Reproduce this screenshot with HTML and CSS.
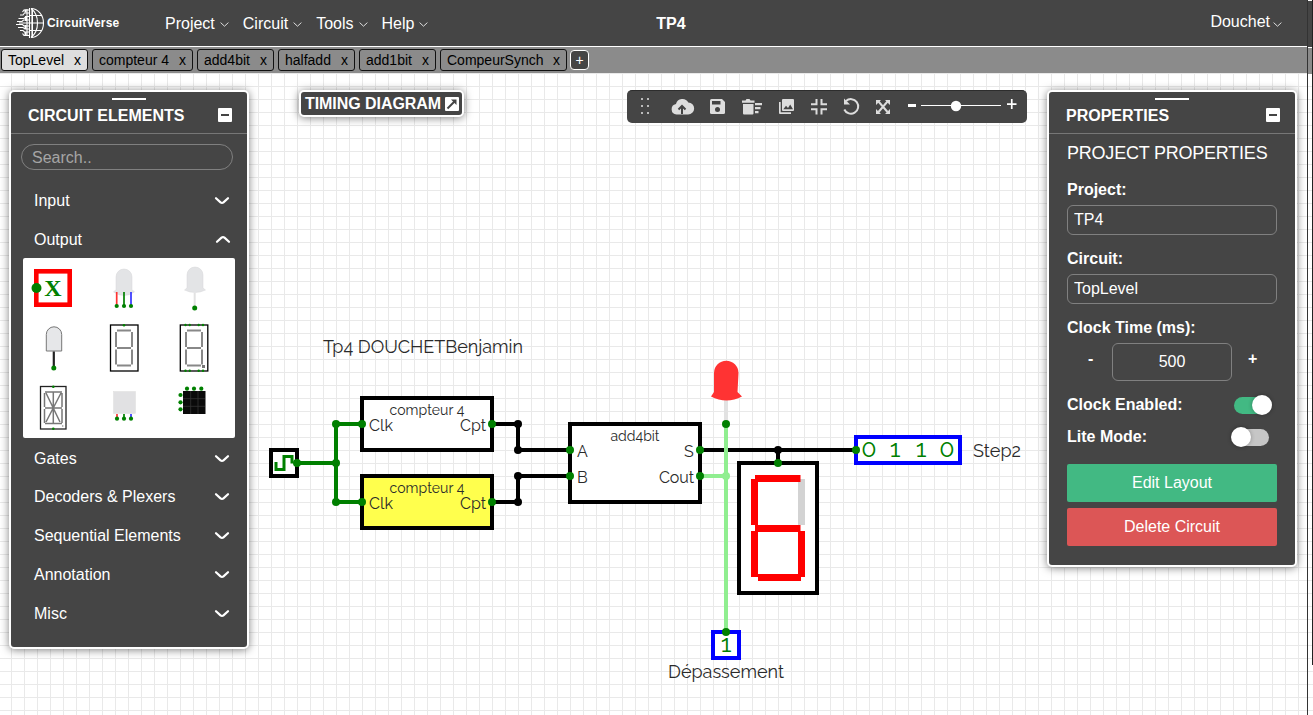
FILE: index.html
```html
<!DOCTYPE html>
<html lang="en">
<head>
<meta charset="utf-8">
<title>CircuitVerse - TP4</title>
<link rel="stylesheet" href="styles.css">
</head>
<body>
<svg class="defs" width="0" height="0">
  <defs>
    <symbol id="thin-chev" viewBox="0 0 9 5"><path d="M.6.6 4.5 4.2 8.4.6" fill="none" stroke="#ddd" stroke-width="1"/></symbol>
    <symbol id="chev" viewBox="0 0 16 10"><path d="M2 2.200 L6.500 6.400Q8 7.500 9.500 6.400L14 2.200" fill="none" stroke="#fff" stroke-width="2.200" stroke-linecap="round"/></symbol>
  </defs>
</svg>
<div class="app">
  <header class="navbar">
    <div class="brand">
      <svg width="30" height="32" viewBox="0 0 30 32" fill="none" stroke="#fff" stroke-width="1.100">
        <path d="M14.500 1v30M16 1.500c6.500 0 12.500 6 12.500 14.500S22.500 30.500 16 30.500M16 1.500c4 3 6.500 8 6.500 14.500S20 27.500 16 30.500M15 8.500h11.500M15 16h13.500M15 23.500h11.500"/>
        <path d="M17.200 1.500v29" stroke-width="1.600"/>
        <path d="M14 3H9L7.500 5M14 6H9.500L8 8H5M14 9.500h-3L9 11.500H3.500M14 13H8.500L7 14.500H2M14 16H4M14 19H9l-1.500-1.500H1M14 22h-4l-2-1.500H3M14 25H9.500L8 23.500H5M14 28.500H9L7.500 26.500M12 2v27"/>
        <path d="M10.500 2.500v3M11 9v5M10.500 18v4M10.500 25v3" stroke-width="2"/>
      </svg>
      <span class="brand-name">CircuitVerse</span>
    </div>
    <nav class="menu">
      <span>Project<svg width="9" height="5"><use href="#thin-chev"/></svg></span>
      <span>Circuit<svg width="9" height="5"><use href="#thin-chev"/></svg></span>
      <span>Tools<svg width="9" height="5"><use href="#thin-chev"/></svg></span>
      <span>Help<svg width="9" height="5"><use href="#thin-chev"/></svg></span>
    </nav>
    <div class="project-name">TP4</div>
    <div class="user">Douchet<svg width="9" height="5"><use href="#thin-chev"/></svg></div>
  </header>
  <div class="tabs">
    <div class="tab active w87"><span>TopLevel</span><span>x</span></div>
    <div class="tab w101"><span>compteur 4</span><span>x</span></div>
    <div class="tab w77"><span>add4bit</span><span>x</span></div>
    <div class="tab w77"><span>halfadd</span><span>x</span></div>
    <div class="tab w77"><span>add1bit</span><span>x</span></div>
    <div class="tab w127"><span>CompeurSynch</span><span>x</span></div>
    <div class="tab-add">+</div>
  </div>
  <main class="workspace">
    <svg class="canvas" width="1307" height="642" viewBox="0 73 1307 642">
      <defs>
        <pattern id="grid" x="11" y="86" width="13" height="13" patternUnits="userSpaceOnUse"><path d="M.5 0V13M0 .5H13" stroke="#e9e9e9" stroke-width="1"/></pattern>
      </defs>
      <rect y="73" width="1307" height="642" fill="#fff"/>
      <rect y="73" width="1307" height="642" fill="url(#grid)"/>
      <g class="label">
        <text x="323" y="353" textLength="200">Tp4 DOUCHETBenjamin</text>
        <text x="973" y="457" textLength="48">Step2</text>
        <text x="668" y="678" textLength="116">Dépassement</text>
      </g>
      <g fill="#fff" stroke="#000" stroke-width="4">
        <rect x="362" y="398" width="130" height="52"/>
        <rect x="362" y="476" width="130" height="52" fill="#ffff4d"/>
        <rect x="570" y="424" width="130" height="78"/>
        <rect x="271" y="450" width="26" height="26"/>
      </g>
      <g class="pin">
        <text x="369" y="431" textLength="24">Clk</text><text x="460" y="431" textLength="26">Cpt</text>
        <text x="369" y="509" textLength="24">Clk</text><text x="460" y="509" textLength="26">Cpt</text>
        <text x="577" y="457">A</text><text x="577" y="483">B</text>
        <text x="684" y="457">S</text><text x="659" y="483" textLength="35">Cout</text>
      </g>
      <g class="title">
        <text x="389.500" y="415" textLength="75">compteur 4</text>
        <text x="389.500" y="493" textLength="75">compteur 4</text>
        <text x="610.500" y="441" textLength="49">add4bit</text>
      </g>
      <g fill="none" stroke-width="4">
        <path d="M492 424h26v26h52M492 502h26v-26h52M700 450h156M778 450v13" stroke="#000"/>
        <path d="M297 463h39M362 424h-26v78h26" stroke="green"/>
        <path d="M276 462v7.500h8v-13h8v7" stroke="green" stroke-width="3"/>
        <path d="M726 400v24" stroke="#e2e2e2"/>
        <path d="M726 424v208M700 476h26" stroke="#90ee90"/>
      </g>
      <path d="M714 373a12.200 12.200 0 0 1 24.500 0L737.500 392l4.500 4.500q-15.500 8-31 0l3-4.500z" fill="#f33"/>
      <rect x="739" y="463" width="78" height="130" fill="#fff" stroke="#000" stroke-width="4"/>
      <path d="M801.500 479v46" stroke="#d3d3d3" stroke-width="7"/>
      <path d="M755 478.500h45.500M754.500 479v46M755 528.500h45.500M754.500 531v46M801.500 531v46M758 577.500h43" stroke="red" stroke-width="7"/>
      <g fill="#fff" stroke="#00f" stroke-width="4">
        <rect x="856" y="437" width="104" height="26"/><rect x="713" y="632" width="26" height="26"/>
      </g>
      <g class="bit">
        <text x="869" y="457">0</text><text x="895" y="457">1</text><text x="921" y="457">1</text><text x="947" y="457">0</text><text x="726" y="652">1</text>
      </g>
      <g fill="#000"><circle cx="518" cy="424" r="4"/><circle cx="518" cy="450" r="4"/><circle cx="518" cy="476" r="4"/><circle cx="518" cy="502" r="4"/><circle cx="778" cy="450" r="4"/></g>
      <circle cx="726" cy="476" r="4" fill="#90ee90"/>
      <g fill="green"><circle cx="297" cy="463" r="4"/><circle cx="336" cy="424" r="4"/><circle cx="336" cy="463" r="4"/><circle cx="336" cy="502" r="4"/><circle cx="362" cy="424" r="4"/><circle cx="362" cy="502" r="4"/><circle cx="492" cy="424" r="4"/><circle cx="492" cy="502" r="4"/><circle cx="570" cy="450" r="4"/><circle cx="570" cy="476" r="4"/><circle cx="700" cy="450" r="4"/><circle cx="700" cy="476" r="4"/><circle cx="726" cy="424" r="4"/><circle cx="778" cy="463" r="4"/><circle cx="856" cy="450" r="4"/><circle cx="726" cy="632" r="4"/></g>
    </svg>

    <section class="panel elements">
      <div class="panel-head"><i class="grip"></i><span>CIRCUIT ELEMENTS</span><b class="minimize"></b></div>
      <input class="search" placeholder="Search..">
      <div class="category">Input<svg width="16" height="10"><use href="#chev"/></svg></div>
      <div class="category">Output<svg class="up" width="16" height="10"><use href="#chev"/></svg></div>
      <div class="palette">
        <svg width="212" height="180" viewBox="23 258 212 180">
          <rect x="36.300" y="271.300" width="33.400" height="33.400" fill="#fff" stroke="red" stroke-width="4.600"/>
          <circle cx="36.500" cy="288" r="5" fill="green"/>
          <text class="palette-x" x="53" y="296">X</text>
          <g fill="#e3e4e6" stroke="#d6d6d8" stroke-width=".5">
            <path d="M116 277a8 8 0 0 1 16 0v12.500l2.500 2.500q-10.500 7-21 0l2.500-2.500z"/>
            <path d="M187 275a8 8 0 0 1 16 0v13l2.500 2q-10.500 5-21 0l2.500-2z"/>
            <path d="M194.700 293v13" stroke="#e2e2e2" stroke-width="2"/>
          </g>
          <g fill="none" stroke-width="1.700"><path d="M116.700 292v13" stroke="#f33"/><path d="M124 292v13" stroke="green"/><path d="M131 292v13" stroke="#33f"/></g>
          <path d="M46.300 351v-16.500a7.700 7.700 0 0 1 15.400 0V351z" fill="#e6e7e9" stroke="#777"/>
          <path d="M53.800 351.500V366" stroke="#222" stroke-width="2.200"/>
          <g fill="#fff" stroke="#000" stroke-width="1.300"><rect x="110.500" y="325" width="27.500" height="46"/><rect x="180.300" y="325" width="27.500" height="46"/><rect x="40.500" y="386.500" width="25.500" height="42.500" stroke="#222"/></g>
          <g fill="none" stroke="#888" stroke-width="2">
            <path id="seven" d="M117 330.500h14M116 332v15M132 332v15M117 348h14M116 349.500v15M132 349.500v15M117 365.500h14"/>
            <use href="#seven" x="70"/><rect x="202" y="365" width="3" height="3" fill="#777" stroke="none"/>
          </g>
          <g fill="none" stroke="#777" stroke-width="1.500"><path d="M45 392h17M44.500 393v14M62 393v14M45 408h17M44.500 409v14M62 409v14M45 423.500h17M53.300 392v31M46 393l14 29M61 393 46 422"/></g>
          <rect x="113.500" y="391.500" width="22" height="22" fill="#e1e1e3" stroke="#ddd" stroke-width=".5"/>
          <path d="M117 414v4" stroke="#f33" stroke-width="1.700"/><path d="M124 414v4" stroke="green" stroke-width="1.700"/><path d="M131 414v4" stroke="#33f" stroke-width="1.700"/>
          <rect x="183" y="391" width="22.500" height="23" fill="#0a0a0a"/><path d="M190.700 391v23M198 391v23M183 398.700h22M183 406.300h22" stroke="#333" stroke-width=".8"/>
          <g fill="green"><circle cx="116.700" cy="306" r="2.100"/><circle cx="124" cy="306" r="2.100"/><circle cx="131" cy="306" r="2.100"/><circle cx="194.700" cy="308" r="2.500"/><circle cx="53.800" cy="368" r="2.500"/><circle cx="117" cy="418.700" r="2.100"/><circle cx="124" cy="418.700" r="2.100"/><circle cx="131" cy="418.700" r="2.100"/><circle cx="187" cy="388.700" r="2.100"/><circle cx="194" cy="388.700" r="2.100"/><circle cx="201.300" cy="388.700" r="2.100"/><circle cx="180.500" cy="395" r="2.100"/><circle cx="180.500" cy="402.300" r="2.100"/><circle cx="180.500" cy="409.300" r="2.100"/>
          <circle cx="124" cy="325.300" r="1.300"/><circle cx="53.300" cy="386.700" r="1.300"/><circle cx="53.300" cy="428.700" r="1.300"/><circle cx="185.500" cy="325" r="1.200"/><circle cx="189.700" cy="325" r="1.200"/><circle cx="198.700" cy="325" r="1.200"/><circle cx="203" cy="325" r="1.200"/><circle cx="185.500" cy="370.700" r="1.200"/><circle cx="189.700" cy="370.700" r="1.200"/><circle cx="198.700" cy="370.700" r="1.200"/><circle cx="203" cy="370.700" r="1.200"/></g>
          <circle cx="62.700" cy="426" r=".8" fill="#888"/>
        </svg>
      </div>
      <div class="category">Gates<svg width="16" height="10"><use href="#chev"/></svg></div>
      <div class="category">Decoders &amp; Plexers<svg width="16" height="10"><use href="#chev"/></svg></div>
      <div class="category">Sequential Elements<svg width="16" height="10"><use href="#chev"/></svg></div>
      <div class="category">Annotation<svg width="16" height="10"><use href="#chev"/></svg></div>
      <div class="category">Misc<svg width="16" height="10"><use href="#chev"/></svg></div>
    </section>

    <div class="panel timing"><span>TIMING DIAGRAM</span>
      <svg width="14" height="14" viewBox="0 0 14 14"><rect width="14" height="14" rx="1" fill="#fff"/><path d="M2.500 11.500 10 4" fill="none" stroke="#444" stroke-width="2"/><path d="M6 2.500h5.500V8z" fill="#444"/></svg>
    </div>

    <div class="toolbar">
      <svg width="400" height="33" viewBox="627 90 400 33" fill="#ddd">
        <path d="M641 98h2v2h-2zM647 98h2v2h-2zM641 105h2v2h-2zM647 105h2v2h-2zM641 112h2v2h-2zM647 112h2v2h-2z" fill="#bbb"/>
        <path d="M676.500 114.500a5.300 5.300 0 0 1-.5-10.500 6.600 6.600 0 0 1 12.300-1.500 6 6 0 0 1-.3 12z"/>
        <path d="M682 114v-7M678.500 109.500l3.500-3.500 3.500 3.500" fill="none" stroke="#444" stroke-width="2"/>
        <path d="M711.500 99h10.500l3 3v10.500a1.500 1.500 0 0 1-1.500 1.500h-12a1.500 1.500 0 0 1-1.500-1.500v-12a1.500 1.500 0 0 1 1.500-1.500z"/>
        <path d="M712 101h8.500v3.500H712z" fill="#444"/><circle cx="717.500" cy="109.500" r="2.500" fill="#444"/>
        <path d="M742 100.500h3.500l1-1.500h3l1 1.500h4v2.200h-12.500zM743 104h10.500v9.500a1 1 0 0 1-1 1H744a1 1 0 0 1-1-1zM755 103h7v2.200h-7zM755 107h5.500v2.200H755zM755 111h3.500v2.200H755z"/>
        <path d="M783 99h10a1 1 0 0 1 1 1v10a1 1 0 0 1-1 1h-10a1 1 0 0 1-1-1v-10a1 1 0 0 1 1-1zM779 102h1.700v10.300H791v1.700h-11a1 1 0 0 1-1-1z"/>
        <path d="m783.300 109.300 2.700-3.500 2 2.200 2.200-3.500 2.800 4.800z" fill="#444"/>
        <path d="M816.500 99v5.200h-5.500M821.500 99v5.200h5.500M816.500 114.500v-5.200h-5.500M821.500 114.500v-5.200h5.500" fill="none" stroke="#ddd" stroke-width="2"/>
        <path d="M846 101A7.300 7.300 0 1 1 844.300 109.500" fill="none" stroke="#ddd" stroke-width="2"/><path d="M844 98.500v6h6z"/>
        <path d="m878.500 101.500 9 10.500M887.500 101.500l-9 10.500" fill="none" stroke="#ddd" stroke-width="2"/>
        <path d="M876 100h5l-5 5zM890 100h-5l5 5zM876 114h5l-5-5zM890 114h-5l5-5z"/>
        <path d="M908 104h8v3h-8z" fill="#fff"/><path d="M921 105h80v1h-80z" fill="#fff"/><circle cx="956" cy="106" r="5.200" fill="#fff"/>
        <path d="M1007 103.200h9.500v1.700H1007zM1010.900 99h1.700v10h-1.700z" fill="#fff"/>
      </svg>
    </div>

    <section class="panel properties">
      <div class="panel-head"><i class="grip"></i><span>PROPERTIES</span><b class="minimize"></b></div>
      <div class="props">
        <h2>PROJECT PROPERTIES</h2>
        <label>Project:</label><input class="field" value="TP4">
        <label>Circuit:</label><input class="field" value="TopLevel">
        <label>Clock Time (ms):</label>
        <div class="stepper"><span>-</span><input class="field" value="500"><span>+</span></div>
        <div class="switch-row"><span>Clock Enabled:</span><i class="switch on"></i></div>
        <div class="switch-row"><span>Lite Mode:</span><i class="switch"></i></div>
        <button class="btn green">Edit Layout</button>
        <button class="btn red">Delete Circuit</button>
      </div>
    </section>
  </main>
</div>
<div class="window-edge"><i></i></div>
</body>
</html>
```
FILE: styles.css
```css
* { box-sizing: border-box; }
body { margin: 0; width: 1313px; height: 715px; display: flex; overflow: hidden; background: #fff; color: #fff; font: 16px/18px "Liberation Sans", Arial, sans-serif; }
.defs { position: absolute; }
.app { width: 1307px; height: 715px; display: flex; flex-direction: column; }
.navbar { height: 46px; flex: none; background: #454545; display: grid; grid-template-columns: 165px 470px 72px 1fr; align-items: center; }
.brand { display: flex; align-items: center; padding-left: 15px; gap: 2px; }
.brand-name { font: bold 12px/14px "Liberation Sans", Arial, sans-serif; letter-spacing: .2px; }
.menu { display: flex; gap: 14px; padding-top: 2px; }
.menu svg, .user svg { margin-left: 5px; vertical-align: 2px; }
.project-name { text-align: center; font-weight: bold; padding-top: 2px; }
.user { text-align: right; padding-right: 25px; margin-top: -3px; }
.user svg { margin-left: 3px; vertical-align: 0; }
.tabs { height: 27px; flex: none; background: #8b8b8b; border-top: 1px solid #fff; display: flex; gap: 4px; padding: 2px 0 0 1px; color: #000; font-size: 14px; }
.tab { height: 22px; border: 1px solid #111; border-radius: 3px; display: flex; justify-content: space-between; align-items: center; padding: 0 6px; }
.tab.active { background: #dedede; }
.w87 { width: 87px; }
.w101 { width: 101px; }
.w77 { width: 77px; }
.w127 { width: 127px; }
.tab-add { width: 19px; height: 20px; margin-top: 1px; margin-left: -1px; border: 1px solid #fff; border-radius: 4px; background: #454545; color: #fff; text-align: center; line-height: 18px; }
.workspace { position: relative; flex: 1; min-height: 0; }
.canvas { display: block; }
.canvas text { font-family: Raleway, Lato, sans-serif; font-weight: 400; }
.label text { font-size: 18px; fill: #2a2a2a; }
.pin text { font-size: 16px; fill: #2a2a2a; }
.title text { font-size: 14px; fill: #2a2a2a; }
.canvas .bit text { font-size: 25px; fill: green; text-anchor: middle; }
.panel { position: absolute; background: #454545; border: 2px solid #fff; border-radius: 5px; box-shadow: 0 1px 8px rgba(0, 0, 0, .5); }
.elements { left: 9px; top: 17px; width: 240px; height: 559px; }
.panel-head { position: relative; height: 42px; border-bottom: 1px solid #777; display: flex; justify-content: space-between; align-items: center; padding: 5px 15px 0 17px; font-weight: bold; }
.panel-head span { padding-top: 2px; }
.grip { position: absolute; left: 50%; top: 6px; width: 34px; height: 2px; margin-left: -17px; background: #fff; }
.minimize { width: 14px; height: 14px; border-radius: 1px; background: linear-gradient(#444, #444) center / 8px 2px no-repeat #fff; }
.search { display: block; width: 212px; height: 26px; margin: 10px 0 0 10px; padding: 1px 10px 0; background: transparent; color: #fff; border: 1px solid #808080; border-radius: 13px; font: inherit; outline: 0; }
.search::placeholder { color: #a5a5a5; opacity: 1; }
.category { height: 38.800px; display: flex; align-items: flex-start; justify-content: space-between; padding: 0 17px 0 23px; }
.category svg { margin-top: 4px; }
.search + .category { margin-top: 22px; }
.category .up { transform: scaleY(-1); margin-top: 3px; margin-right: -1px; }
.palette { width: 212px; height: 180px; margin: -12px 0 12px 12px; background: #fff; border-radius: 2px; }
.palette svg { display: block; }
.palette-x { font: bold 24px "Liberation Serif", serif; text-anchor: middle; fill: green; }
.timing { left: 299px; top: 17px; width: 165px; height: 27px; display: flex; justify-content: space-between; align-items: center; padding: 0 3px 0 4px; font-weight: bold; }
.timing span { letter-spacing: -.06px; }
.toolbar { position: absolute; left: 627px; top: 17px; width: 400px; height: 33px; background: #454545; border-radius: 5px; border-top: 1px solid #2d2d2d; }
.toolbar svg { display: block; margin-top: -1px; }
.properties { left: 1047px; top: 17px; width: 250px; height: 477px; }
.props { padding: 9px 18px; display: flex; flex-direction: column; }
.props h2 { margin: 0 0 18px; font: 18px/20px "Liberation Sans", Arial, sans-serif; letter-spacing: -.22px; white-space: nowrap; }
.props label, .switch-row { font-weight: bold; }
.props label { margin-bottom: 6px; }
.field { width: 210px; height: 30px; margin-bottom: 15px; padding: 0 6px 1px; background: transparent; color: #fff; border: 1px solid #808080; border-radius: 6px; font: inherit; outline: 0; }
.stepper { display: grid; grid-template-columns: 24px 120px 1fr; column-gap: 0; padding-left: 21px; font-weight: bold; line-height: 31px; }
.stepper span:last-child { padding-left: 16px; }
.stepper .field { width: 120px; height: 38px; margin-bottom: 15px; text-align: center; font-weight: normal; }
.switch-row { height: 18px; display: flex; justify-content: space-between; align-items: center; margin-bottom: 14px; padding-right: 8px; }
.switch { position: relative; width: 35px; height: 17px; border-radius: 9px; background: #c6c6c6; }
.switch::after { content: ""; position: absolute; left: -3px; top: -2px; width: 20px; height: 20px; border-radius: 50%; background: #fff; box-shadow: 0 0 4px rgba(0, 0, 0, .3); }
.switch.on { background: #42b983; }
.switch.on::after { left: 18px; }
.btn { height: 38px; margin: 4px 0 2px; border: 0; border-radius: 2px; color: #fff; font: inherit; }
.green { background: #42b983; }
.red { background: #dc5656; }
.window-edge { width: 6px; height: 715px; border-left: 1px solid #333; background: linear-gradient(#fff 1px, #454545 1px 47px, #fff 47px 48px, #8b8b8b 48px 74px, transparent 74px), repeating-linear-gradient(#fff 0 8px, #e9e9e9 8px 9px, #fff 9px 13px); }
.window-edge i { display: block; height: 665px; border-right: 1px solid #222; }
```
